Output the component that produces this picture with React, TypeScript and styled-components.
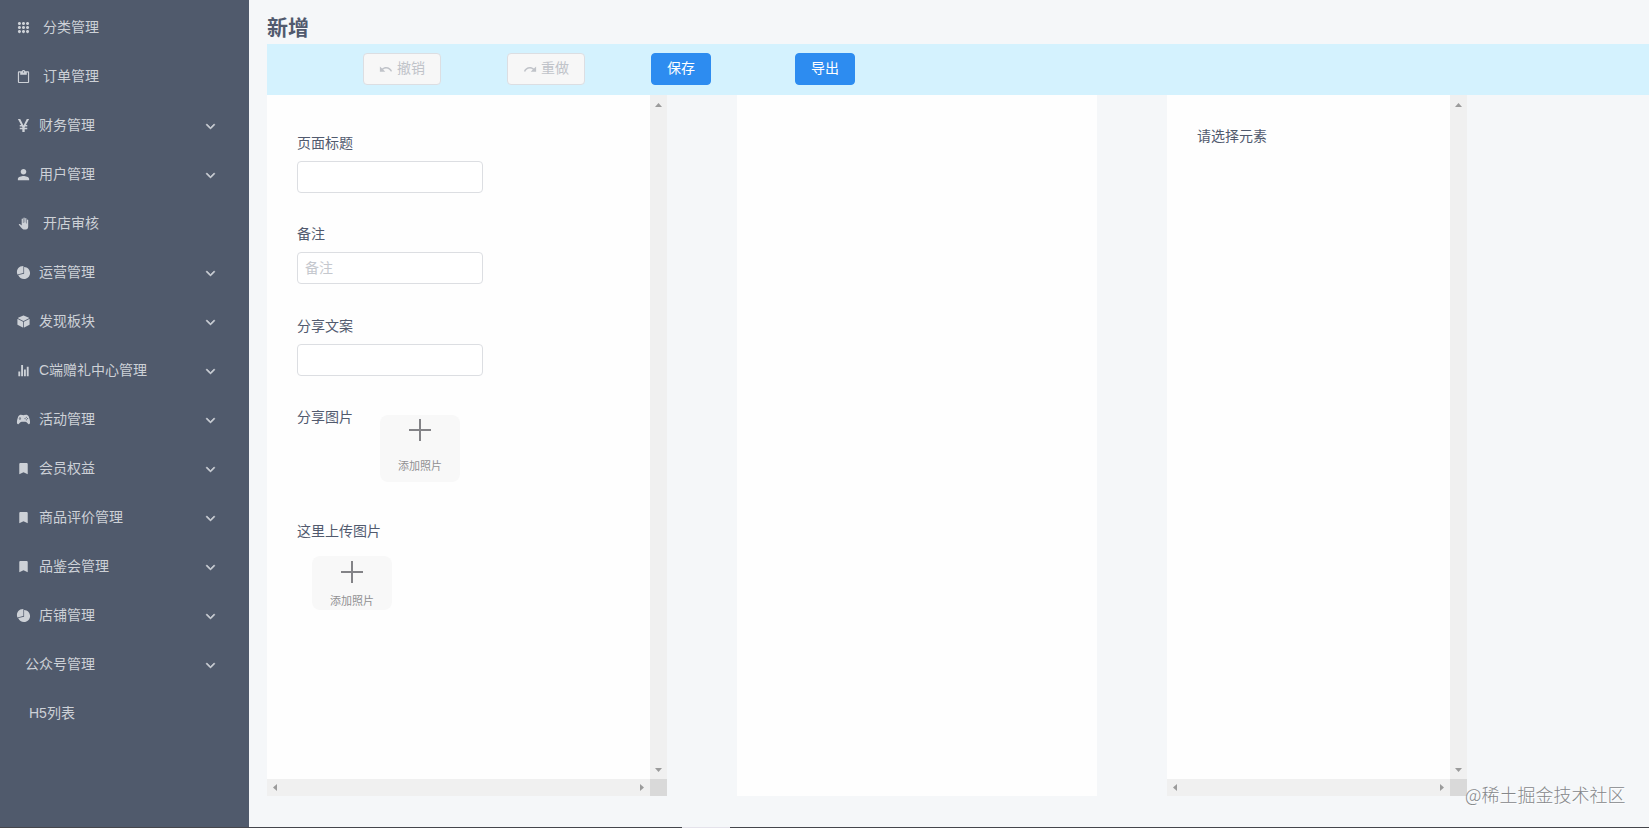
import React from 'react';
import styled, { createGlobalStyle } from 'styled-components';
import type { IconType } from 'react-icons';
import {
  IoIosArrowDown,
  IoIosCube,
  IoIosHand,
  IoIosKeypad,
  IoIosPie,
  IoIosStats,
  IoLogoGameControllerB,
  IoLogoYen,
  IoMdBookmark,
  IoMdClipboard,
  IoMdPerson,
  IoMdRedo,
  IoMdUndo,
} from 'react-icons/io';

const GlobalStyle = createGlobalStyle`
  *, *::before, *::after { box-sizing: border-box; }
  body {
    margin: 0;
    overflow: hidden;
    background: #f5f7f9;
    color: #515a6e;
    font-family: "Liberation Sans", "Noto Sans CJK SC", sans-serif;
    font-size: 14px;
    line-height: 20px;
  }
`;

const Screen = styled.div`
  display: flex;
  flex-direction: column;
  height: 828px;
`;

const Body = styled.div`
  display: flex;
  flex: 1;
  min-height: 0;
`;

const Sidebar = styled.nav`
  flex: 0 0 249px;
  padding-top: 3px;
  background: #505a6c;
`;

const MenuRow = styled.div<{ $indent: number }>`
  display: flex;
  align-items: center;
  height: 49px;
  padding: 0 32px 0 ${(p) => p.$indent}px;
  color: #cdd1d7;
`;

const MenuIcon = styled.span`
  display: flex;
  width: 15px;
  font-size: 15px;
`;

const MenuLabel = styled.span<{ $gap: number }>`
  flex: 1;
  margin: -2px 0 0 ${(p) => p.$gap}px;
`;

const Chevron = styled(IoIosArrowDown)`
  width: 13px;
  height: 13px;
  margin-top: 1px;
  stroke: currentColor;
  stroke-width: 24px;
`;

const Main = styled.main`
  flex: 1;
  min-width: 0;
  padding: 12px 0 0 18px;
`;

const Title = styled.h1`
  height: 32px;
  margin: 0;
  font-size: 21px;
  font-weight: 700;
  line-height: 32px;
`;

const Toolbar = styled.div`
  display: grid;
  grid-template-columns: repeat(4, 144px);
  align-items: start;
  justify-items: start;
  height: 51px;
  padding: 9px 0 0 96px;
  background: #d4f2fe;
`;

const Button = styled.button<{ $primary?: boolean }>`
  display: flex;
  align-items: center;
  height: 32px;
  gap: 4px;
  padding: 0 15px 3px;
  border: 1px solid ${(p) => (p.$primary ? '#2d8cf0' : '#dcdee2')};
  border-radius: 4px;
  background: ${(p) => (p.$primary ? '#2d8cf0' : '#f7f7f7')};
  color: ${(p) => (p.$primary ? '#fff' : '#c0c3c9')};
  font: inherit;

  svg {
    margin-top: 3px;
  }
`;

const Panels = styled.div`
  display: flex;
  gap: 70px;
  height: 701px;
`;

const ScrollPanel = styled.section<{ $width: number }>`
  display: grid;
  grid-template: minmax(0, 1fr) 17px / minmax(0, 1fr) 17px;
  width: ${(p) => p.$width}px;
  background: #fefefe;
`;

const Canvas = styled.section`
  width: 360px;
  background: #fefefe;
`;

const PanelContent = styled.div<{ $top: number }>`
  padding: ${(p) => p.$top}px 30px 0;
`;

const Track = styled.div<{ $vertical?: boolean }>`
  display: flex;
  flex-direction: ${(p) => (p.$vertical ? 'column' : 'row')};
  align-items: center;
  justify-content: space-between;
  padding: ${(p) => (p.$vertical ? '8px 0 7px' : '0 6px 0 6px')};
  background: #f0f0f0;
`;

const Corner = styled.div`
  background: #d9d9d9;
`;

const Field = styled.div`
  height: 91.4px;
`;

const Label = styled.div`
  height: 20px;
`;

const Input = styled.input`
  display: block;
  width: 186px;
  height: 32px;
  margin-top: 8px;
  padding: 0 7px 1px;
  border: 1px solid #dcdee2;
  border-radius: 4px;
  background: #fff;
  color: #515a6e;
  font: inherit;

  &::placeholder {
    color: #c5c8ce;
    opacity: 1;
  }
`;

const ShareRow = styled.div`
  display: flex;
  gap: 27px;
  height: 114px;
`;

const UploadTile = styled.div<{ $compact?: boolean }>`
  display: flex;
  flex-direction: column;
  align-items: center;
  justify-content: space-between;
  width: 80px;
  height: ${(p) => (p.$compact ? 54 : 67)}px;
  margin: ${(p) => (p.$compact ? '15px 0 0 15px' : '8px 0 0')};
  padding: ${(p) => (p.$compact ? '5px 0 0' : '4px 0 7px')};
  border-radius: 8px;
  background: #f8f8f8;
  color: #909092;
  font-size: 11px;
  line-height: 18px;
`;

const BottomEdge = styled.div`
  display: flex;
  flex: 0 0 1px;
  padding-left: 682px;
  background: #45464c;
`;

const EdgeTab = styled.div`
  width: 48px;
  background: #e4e2ea;
`;

const Watermark = styled.div`
  position: absolute;
  top: 782px;
  left: 1465px;
  color: #85878a;
  font-family: "Noto Sans CJK SC", sans-serif;
  font-size: 18px;
  font-weight: 300;
  line-height: 24px;
  white-space: nowrap;
  text-shadow: 1px 1px 1px #fff;
`;

type MenuItem = { label: string; icon?: IconType; leaf?: boolean; indent?: number };

const menu: MenuItem[] = [
  { label: '分类管理', icon: IoIosKeypad, leaf: true },
  { label: '订单管理', icon: IoMdClipboard, leaf: true },
  { label: '财务管理', icon: IoLogoYen },
  { label: '用户管理', icon: IoMdPerson },
  { label: '开店审核', icon: IoIosHand, leaf: true },
  { label: '运营管理', icon: IoIosPie },
  { label: '发现板块', icon: IoIosCube },
  { label: 'C端赠礼中心管理', icon: IoIosStats },
  { label: '活动管理', icon: IoLogoGameControllerB },
  { label: '会员权益', icon: IoMdBookmark },
  { label: '商品评价管理', icon: IoMdBookmark },
  { label: '品鉴会管理', icon: IoMdBookmark },
  { label: '店铺管理', icon: IoIosPie },
  { label: '公众号管理', indent: 25 },
  { label: 'H5列表', leaf: true, indent: 29 },
];

const arrows = {
  up: 'M0 4L3.5 0L7 4Z',
  down: 'M0 0H7L3.5 4Z',
  left: 'M4 0V7L0 3.5Z',
  right: 'M0 0L4 3.5L0 7Z',
};

function Arrow({ dir }: { dir: keyof typeof arrows }) {
  const vertical = dir === 'up' || dir === 'down';
  return (
    <svg width={vertical ? 7 : 4} height={vertical ? 4 : 7} fill="#9b9b9b">
      <path d={arrows[dir]} />
    </svg>
  );
}

function Scrollable({ width, top, children }: { width: number; top: number; children: React.ReactNode }) {
  return (
    <ScrollPanel $width={width}>
      <PanelContent $top={top}>{children}</PanelContent>
      <Track $vertical>
        <Arrow dir="up" />
        <Arrow dir="down" />
      </Track>
      <Track>
        <Arrow dir="left" />
        <Arrow dir="right" />
      </Track>
      <Corner />
    </ScrollPanel>
  );
}

function Upload({ compact }: { compact?: boolean }) {
  return (
    <UploadTile $compact={compact}>
      <svg width="22" height="22" fill="none" stroke="#838387" strokeWidth="2">
        <path d="M11 0V22M0 11H22" />
      </svg>
      <span>添加照片</span>
    </UploadTile>
  );
}

export default function App() {
  return (
    <Screen>
      <GlobalStyle />
      <Body>
        <Sidebar>
          {menu.map(({ label, icon: Icon, leaf, indent }) => (
            <MenuRow key={label} $indent={indent ?? 16}>
              {Icon && (
                <MenuIcon>
                  <Icon />
                </MenuIcon>
              )}
              <MenuLabel $gap={Icon ? (leaf ? 12 : 8) : 0}>{label}</MenuLabel>
              {!leaf && <Chevron />}
            </MenuRow>
          ))}
        </Sidebar>
        <Main>
          <Title>新增</Title>
          <Toolbar>
            <Button disabled>
              <IoMdUndo />
              撤销
            </Button>
            <Button disabled>
              <IoMdRedo />
              重做
            </Button>
            <Button $primary>保存</Button>
            <Button $primary>导出</Button>
          </Toolbar>
          <Panels>
            <Scrollable width={400} top={38}>
              <Field>
                <Label>页面标题</Label>
                <Input />
              </Field>
              <Field>
                <Label>备注</Label>
                <Input placeholder="备注" />
              </Field>
              <Field>
                <Label>分享文案</Label>
                <Input />
              </Field>
              <ShareRow>
                <Label>分享图片</Label>
                <Upload />
              </ShareRow>
              <Label>这里上传图片</Label>
              <Upload compact />
            </Scrollable>
            <Canvas />
            <Scrollable width={300} top={31}>
              <Label>请选择元素</Label>
            </Scrollable>
          </Panels>
        </Main>
      </Body>
      <BottomEdge>
        <EdgeTab />
      </BottomEdge>
      <Watermark>@稀土掘金技术社区</Watermark>
    </Screen>
  );
}
